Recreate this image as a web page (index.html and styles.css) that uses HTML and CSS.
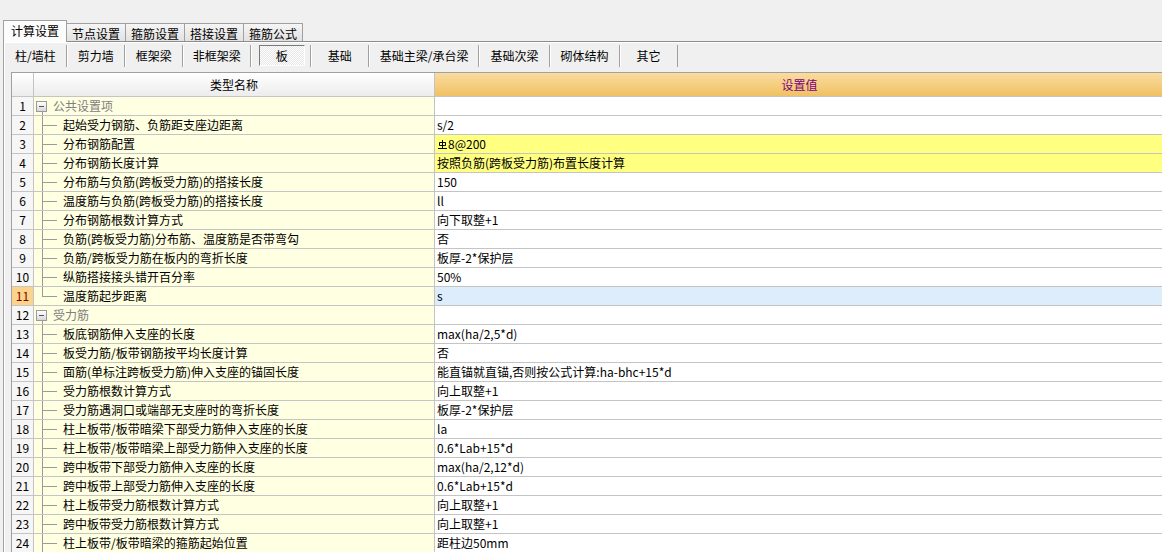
FILE: index.html
```html
<!DOCTYPE html>
<html lang="zh-CN">
<head>
<meta charset="utf-8">
<title>计算设置</title>
<link rel="stylesheet" href="styles.css">
</head>
<body>
<div class="tabs">
  <div class="tab active">计算设置</div>
  <div class="tab">节点设置</div>
  <div class="tab">箍筋设置</div>
  <div class="tab">搭接设置</div>
  <div class="tab">箍筋公式</div>
</div>
<div class="panel">
  <div class="toolbar">
    <div class="tb">柱/墙柱</div>
    <div class="tb">剪力墙</div>
    <div class="tb">框架梁</div>
    <div class="tb tb-nk">非框架梁</div>
    <div class="tb tb-sel"><span class="pressed">板</span></div>
    <div class="tb">基础</div>
    <div class="tb">基础主梁/承台梁</div>
    <div class="tb">基础次梁</div>
    <div class="tb">砌体结构</div>
    <div class="tb">其它</div>
  </div>
  <div class="grid">
    <div class="row head"><div class="c num"></div><div class="c name">类型名称</div><div class="c val">设置值</div></div>
    <div class="row"><div class="c num">1</div><div class="c name grp"><span class="tog"></span><span class="gtext">公共设置项</span></div><div class="c val"></div></div>
    <div class="row"><div class="c num">2</div><div class="c name"><span class="br"></span>起始受力钢筋、负筋距支座边距离</div><div class="c val">s/2</div></div>
    <div class="row hl"><div class="c num">3</div><div class="c name"><span class="br"></span>分布钢筋配置</div><div class="c val"><svg class="rb" width="9" height="9" viewBox="0 0 9 9"><path d="M4.5 0v8.5M1.5 2.5h6v3h-6zM0 8.5h9" stroke="#000" stroke-width="1" fill="none"/></svg>8@200</div></div>
    <div class="row hl"><div class="c num">4</div><div class="c name"><span class="br"></span>分布钢筋长度计算</div><div class="c val">按照负筋(跨板受力筋)布置长度计算</div></div>
    <div class="row"><div class="c num">5</div><div class="c name"><span class="br"></span>分布筋与负筋(跨板受力筋)的搭接长度</div><div class="c val">150</div></div>
    <div class="row"><div class="c num">6</div><div class="c name"><span class="br"></span>温度筋与负筋(跨板受力筋)的搭接长度</div><div class="c val">ll</div></div>
    <div class="row"><div class="c num">7</div><div class="c name"><span class="br"></span>分布钢筋根数计算方式</div><div class="c val">向下取整+1</div></div>
    <div class="row"><div class="c num">8</div><div class="c name"><span class="br"></span>负筋(跨板受力筋)分布筋、温度筋是否带弯勾</div><div class="c val">否</div></div>
    <div class="row"><div class="c num">9</div><div class="c name"><span class="br"></span>负筋/跨板受力筋在板内的弯折长度</div><div class="c val">板厚-2*保护层</div></div>
    <div class="row"><div class="c num">10</div><div class="c name"><span class="br"></span>纵筋搭接接头错开百分率</div><div class="c val">50%</div></div>
    <div class="row sel"><div class="c num">11</div><div class="c name"><span class="br last"></span>温度筋起步距离</div><div class="c val">s</div></div>
    <div class="row"><div class="c num">12</div><div class="c name grp"><span class="tog"></span><span class="gtext">受力筋</span></div><div class="c val"></div></div>
    <div class="row"><div class="c num">13</div><div class="c name"><span class="br"></span>板底钢筋伸入支座的长度</div><div class="c val">max(ha/2,5*d)</div></div>
    <div class="row"><div class="c num">14</div><div class="c name"><span class="br"></span>板受力筋/板带钢筋按平均长度计算</div><div class="c val">否</div></div>
    <div class="row"><div class="c num">15</div><div class="c name"><span class="br"></span>面筋(单标注跨板受力筋)伸入支座的锚固长度</div><div class="c val">能直锚就直锚,否则按公式计算:ha-bhc+15*d</div></div>
    <div class="row"><div class="c num">16</div><div class="c name"><span class="br"></span>受力筋根数计算方式</div><div class="c val">向上取整+1</div></div>
    <div class="row"><div class="c num">17</div><div class="c name"><span class="br"></span>受力筋遇洞口或端部无支座时的弯折长度</div><div class="c val">板厚-2*保护层</div></div>
    <div class="row"><div class="c num">18</div><div class="c name"><span class="br"></span>柱上板带/板带暗梁下部受力筋伸入支座的长度</div><div class="c val">la</div></div>
    <div class="row"><div class="c num">19</div><div class="c name"><span class="br"></span>柱上板带/板带暗梁上部受力筋伸入支座的长度</div><div class="c val">0.6*Lab+15*d</div></div>
    <div class="row"><div class="c num">20</div><div class="c name"><span class="br"></span>跨中板带下部受力筋伸入支座的长度</div><div class="c val">max(ha/2,12*d)</div></div>
    <div class="row"><div class="c num">21</div><div class="c name"><span class="br"></span>跨中板带上部受力筋伸入支座的长度</div><div class="c val">0.6*Lab+15*d</div></div>
    <div class="row"><div class="c num">22</div><div class="c name"><span class="br"></span>柱上板带受力筋根数计算方式</div><div class="c val">向上取整+1</div></div>
    <div class="row"><div class="c num">23</div><div class="c name"><span class="br"></span>跨中板带受力筋根数计算方式</div><div class="c val">向上取整+1</div></div>
    <div class="row"><div class="c num">24</div><div class="c name"><span class="br"></span>柱上板带/板带暗梁的箍筋起始位置</div><div class="c val">距柱边50mm</div></div>
  </div>
</div>
</body>
</html>
```

FILE: styles.css
```css
html, body {
  margin: 0;
  padding: 0;
}
body {
  background: #f0f0f0;
  font-family: "Noto Sans CJK SC", "Noto Sans", sans-serif;
  font-size: 12px;
  color: #000;
  height: 552px;
  overflow: hidden;
}

/* ---------- tabs ---------- */
.tabs {
  display: flex;
  align-items: flex-end;
  height: 21px;
  padding: 20px 0 0 3px;
  position: relative;
  z-index: 1;
}
.tab {
  box-sizing: border-box;
  height: 18px;
  padding: 2px 5px 0;
  border: 1px solid #a0a0a0;
  border-left: 0;
  border-bottom: 0;
  background: linear-gradient(#f5f5f5, #e2e2e2);
  line-height: 15px;
  white-space: nowrap;
}
.tab.active {
  height: 22px;
  margin-bottom: -1px;
  padding: 0 7px;
  border-left: 1px solid #a0a0a0;
  background: #fcfcfc;
  line-height: 20px;
}

/* ---------- panel ---------- */
.panel {
  margin-left: 3px;
  border-top: 1px solid #8c8c8c;
  border-left: 1px solid #a0a0a0;
  box-shadow: inset 1px 1px 0 #fff;
  height: 520px;
}

.toolbar {
  display: flex;
  height: 30px;
  box-sizing: border-box;
  padding-top: 3px;
}
.tb {
  box-sizing: border-box;
  min-width: 58px;
  height: 22px;
  padding: 0 10px;
  border-left: 1px solid #fff;
  border-right: 1px solid #a0a0a0;
  line-height: 21px;
  text-align: center;
  white-space: nowrap;
}
.tb-nk {
  padding: 0 9px;
}
.tb-sel {
  padding: 0 5px 0 7px;
}
.pressed {
  display: block;
  box-sizing: border-box;
  width: 46px;
  height: 21px;
  border: 1px solid;
  border-color: #7a7a7a #fff #fff #7a7a7a;
  background-color: #fff;
  background-image: conic-gradient(#e6e6e6 25%, transparent 0 50%, #e6e6e6 0 75%, transparent 0);
  background-size: 2px 2px;
  line-height: 19px;
  text-align: center;
}

/* ---------- grid ---------- */
.grid {
  margin-left: 7px;
  border-top: 1px solid #a0a0a0;
  border-left: 1px solid #a0a0a0;
}
.row {
  display: flex;
}
.c {
  box-sizing: border-box;
  height: 19px;
  border-bottom: 1px solid #c4c4c4;
  line-height: 18px;
  white-space: nowrap;
  overflow: hidden;
}
.num {
  width: 22px;
  flex: none;
  border-right: 1px solid #c4c4c4;
  background: #f6f6f6;
  text-align: center;
}
.name {
  width: 401px;
  flex: none;
  display: flex;
  border-right: 1px solid #c4c4c4;
  background: #ffffe1;
}
.val {
  flex: 1;
  padding-left: 2px;
  background: #fff;
}

.head .c {
  height: 24px;
  line-height: 23px;
  background: linear-gradient(#ffffff, #ececec);
  justify-content: center;
  text-align: center;
}
.head .val {
  background: linear-gradient(#fadc9f, #f0c163);
  color: #800080;
}

/* tree */
.br {
  flex: none;
  width: 15px;
  margin: 0 6px 0 8px;
  background:
    linear-gradient(#9a9a9a, #9a9a9a) 0 0 / 1px 100% no-repeat,
    linear-gradient(#9a9a9a, #9a9a9a) 0 9px / 100% 1px no-repeat;
}
.br.last {
  background:
    linear-gradient(#9a9a9a, #9a9a9a) 0 0 / 1px 10px no-repeat,
    linear-gradient(#9a9a9a, #9a9a9a) 0 9px / 100% 1px no-repeat;
}
.name.grp {
  background:
    linear-gradient(#9a9a9a, #9a9a9a) 8px 15px / 1px 3px no-repeat,
    #ffffe1;
}
.tog {
  flex: none;
  box-sizing: border-box;
  width: 11px;
  height: 11px;
  margin: 4px 0 0 2px;
  border: 1px solid #9a9a9a;
  background:
    linear-gradient(#555, #555) center / 5px 1px no-repeat,
    linear-gradient(#ffffff, #d8d8d8);
}
.gtext {
  margin-left: 6px;
  color: #808080;
}

/* states */
.hl .val {
  background: #ffff80;
}
.sel .num {
  background: #fbd38b;
  color: #800000;
}
.sel .val {
  background: #ddedfc;
}

.rb {
  display: inline-block;
  vertical-align: 0;
  margin: 0 1px 0 1px;
}
```
